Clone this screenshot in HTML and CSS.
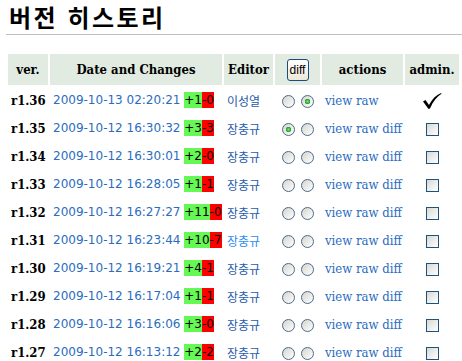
FILE: index.html
```html
<!DOCTYPE html>
<html lang="ko">
<head>
    <meta charset="UTF-8">
    <title>버전 히스토리</title>
    <link rel="stylesheet" href="styles.css">
</head>
<body>
<div class="page">
    <h1 class="title">버전 히스토리</h1>
    <hr class="rule">
    <form method="get">
        <table class="history">
            <colgroup>
                <col class="c-ver">
                <col class="c-date">
                <col class="c-editor">
                <col class="c-diff">
                <col class="c-actions">
                <col class="c-admin">
            </colgroup>
            <thead>
            <tr>
                <th>ver.</th>
                <th>Date and Changes</th>
                <th>Editor</th>
                <th><button type="button" class="diff-btn">diff</button></th>
                <th>actions</th>
                <th>admin.</th>
            </tr>
            </thead>
            <tbody>
            <tr>
                <td class="ver">r1.36</td>
                <td class="date">2009-10-13 02:20:21 <span class="add">+1</span><span class="del">-0</span></td>
                <td class="editor"><a href="#">이성열</a></td>
                <td class="pick"><input type="radio" name="old"><input type="radio" name="new" checked></td>
                <td class="actions"><a href="#">view</a> <a href="#">raw</a></td>
                <td class="admin">
                    <svg width="20" height="18" viewBox="0 0 20 18"><path d="M1 9.5 L3.5 8 L7 13 C10 7 14 3 19 1 L19.5 1.8 C15 4.5 11 9.5 8 16.5 L6.5 17 Z" fill="#000"/></svg>
                </td>
            </tr>
            <tr>
                <td class="ver">r1.35</td>
                <td class="date">2009-10-12 16:30:32 <span class="add">+3</span><span class="del">-3</span></td>
                <td class="editor"><a href="#">장충규</a></td>
                <td class="pick"><input type="radio" name="old" checked><input type="radio" name="new"></td>
                <td class="actions"><a href="#">view</a> <a href="#">raw</a> <a href="#">diff</a></td>
                <td class="admin"><input type="checkbox"></td>
            </tr>
            <tr>
                <td class="ver">r1.34</td>
                <td class="date">2009-10-12 16:30:01 <span class="add">+2</span><span class="del">-0</span></td>
                <td class="editor"><a href="#">장충규</a></td>
                <td class="pick"><input type="radio" name="old"><input type="radio" name="new"></td>
                <td class="actions"><a href="#">view</a> <a href="#">raw</a> <a href="#">diff</a></td>
                <td class="admin"><input type="checkbox"></td>
            </tr>
            <tr>
                <td class="ver">r1.33</td>
                <td class="date">2009-10-12 16:28:05 <span class="add">+1</span><span class="del">-1</span></td>
                <td class="editor"><a href="#">장충규</a></td>
                <td class="pick"><input type="radio" name="old"><input type="radio" name="new"></td>
                <td class="actions"><a href="#">view</a> <a href="#">raw</a> <a href="#">diff</a></td>
                <td class="admin"><input type="checkbox"></td>
            </tr>
            <tr>
                <td class="ver">r1.32</td>
                <td class="date">2009-10-12 16:27:27 <span class="add">+11</span><span class="del">-0</span></td>
                <td class="editor"><a href="#">장충규</a></td>
                <td class="pick"><input type="radio" name="old"><input type="radio" name="new"></td>
                <td class="actions"><a href="#">view</a> <a href="#">raw</a> <a href="#">diff</a></td>
                <td class="admin"><input type="checkbox"></td>
            </tr>
            <tr>
                <td class="ver">r1.31</td>
                <td class="date">2009-10-12 16:23:44 <span class="add">+10</span><span class="del">-7</span></td>
                <td class="editor"><a href="#" class="hover">장충규</a></td>
                <td class="pick"><input type="radio" name="old"><input type="radio" name="new"></td>
                <td class="actions"><a href="#">view</a> <a href="#">raw</a> <a href="#">diff</a></td>
                <td class="admin"><input type="checkbox"></td>
            </tr>
            <tr>
                <td class="ver">r1.30</td>
                <td class="date">2009-10-12 16:19:21 <span class="add">+4</span><span class="del">-1</span></td>
                <td class="editor"><a href="#">장충규</a></td>
                <td class="pick"><input type="radio" name="old"><input type="radio" name="new"></td>
                <td class="actions"><a href="#">view</a> <a href="#">raw</a> <a href="#">diff</a></td>
                <td class="admin"><input type="checkbox"></td>
            </tr>
            <tr>
                <td class="ver">r1.29</td>
                <td class="date">2009-10-12 16:17:04 <span class="add">+1</span><span class="del">-1</span></td>
                <td class="editor"><a href="#">장충규</a></td>
                <td class="pick"><input type="radio" name="old"><input type="radio" name="new"></td>
                <td class="actions"><a href="#">view</a> <a href="#">raw</a> <a href="#">diff</a></td>
                <td class="admin"><input type="checkbox"></td>
            </tr>
            <tr>
                <td class="ver">r1.28</td>
                <td class="date">2009-10-12 16:16:06 <span class="add">+3</span><span class="del">-0</span></td>
                <td class="editor"><a href="#">장충규</a></td>
                <td class="pick"><input type="radio" name="old"><input type="radio" name="new"></td>
                <td class="actions"><a href="#">view</a> <a href="#">raw</a> <a href="#">diff</a></td>
                <td class="admin"><input type="checkbox"></td>
            </tr>
            <tr>
                <td class="ver">r1.27</td>
                <td class="date">2009-10-12 16:13:12 <span class="add">+2</span><span class="del">-2</span></td>
                <td class="editor"><a href="#">장충규</a></td>
                <td class="pick"><input type="radio" name="old"><input type="radio" name="new"></td>
                <td class="actions"><a href="#">view</a> <a href="#">raw</a> <a href="#">diff</a></td>
                <td class="admin"><input type="checkbox"></td>
            </tr>
            </tbody>
        </table>
    </form>
</div>
</body>
</html>
```

FILE: styles.css
```css
body {
    margin: 0;
    background-color: #fff;
    font-family: "DejaVu Serif", Georgia, serif;
    color: #000;
}

.page {
    padding: 0 0 0 6px;
}

.title {
    margin: 0;
    padding: 2px 0 0 3px;
    height: 31px;
    font-family: "Noto Sans CJK KR", sans-serif;
    font-size: 24px;
    font-weight: bold;
    letter-spacing: 2.5px;
    line-height: 30px;
}

.rule {
    margin: 1px 0 0 0;
    border: none;
    border-top: 1px solid #c0c0c0;
    height: 0;
}

form {
    margin: 0;
    padding-top: 17px;
}

.history {
    border-spacing: 2px;
    table-layout: fixed;
    width: 455px;
    margin-left: 0;
}

.c-ver { width: 40px; }
.c-date { width: 172px; }
.c-editor { width: 49px; }
.c-diff { width: 45px; }
.c-actions { width: 81px; }
.c-admin { width: 54px; }

.history th {
    background-color: #e1ebe1;
    height: 31px;
    padding: 0;
    font-family: "DejaVu Serif Condensed", "DejaVu Serif", serif;
    font-size: 13px;
    font-weight: bold;
    text-align: center;
    white-space: nowrap;
}

.history td {
    height: 26px;
    padding: 0 3px;
    white-space: nowrap;
    vertical-align: middle;
}

.diff-btn {
    width: 22px;
    height: 22px;
    padding: 0;
    border: 1px solid #1c4c7c;
    border-radius: 3px;
    background: linear-gradient(#fff, #ece9d8);
    font-family: "Liberation Sans", sans-serif;
    font-size: 12px;
    color: #000;
    cursor: pointer;
}

.ver {
    text-align: center;
    font-family: "DejaVu Serif Condensed", "DejaVu Serif", serif;
    font-size: 13px;
    font-weight: bold;
}

.date {
    font-family: "DejaVu Sans", Verdana, sans-serif;
    font-size: 12px;
    color: #2a6cc0;
}

.add, .del {
    display: inline-block;
    line-height: 16px;
    color: #000;
}

.add {
    background-color: #66f855;
}

.del {
    background-color: #ff0000;
}

a {
    color: #1f5ca8;
    text-decoration: none;
}

.editor {
    font-family: "Noto Sans CJK KR", sans-serif;
    font-size: 12px;
    text-align: left;
}

.editor a.hover {
    color: #2d8cf0;
}

.pick {
    text-align: center;
}

.pick input[type="radio"] {
    appearance: none;
    width: 13px;
    height: 13px;
    margin: 0 3px;
    border: 1px solid #4b6a8a;
    border-radius: 50%;
    background: linear-gradient(135deg, #d4d4ce, #fff);
    vertical-align: middle;
}

.pick input[type="radio"]:checked {
    background: radial-gradient(circle, #7ee07e 0, #21a121 2.5px, transparent 3px), linear-gradient(135deg, #d4d4ce, #fff);
}

.actions {
    font-family: "DejaVu Serif Condensed", "DejaVu Serif", serif;
    font-size: 13px;
}

.actions a {
    color: #2a6cc0;
}

.admin {
    text-align: center;
}

.admin svg {
    vertical-align: middle;
}

.admin input[type="checkbox"] {
    appearance: none;
    width: 13px;
    height: 13px;
    margin: 0;
    border: 1px solid #1c5180;
    background: linear-gradient(135deg, #d8d8d2, #fff);
    vertical-align: middle;
}
```
